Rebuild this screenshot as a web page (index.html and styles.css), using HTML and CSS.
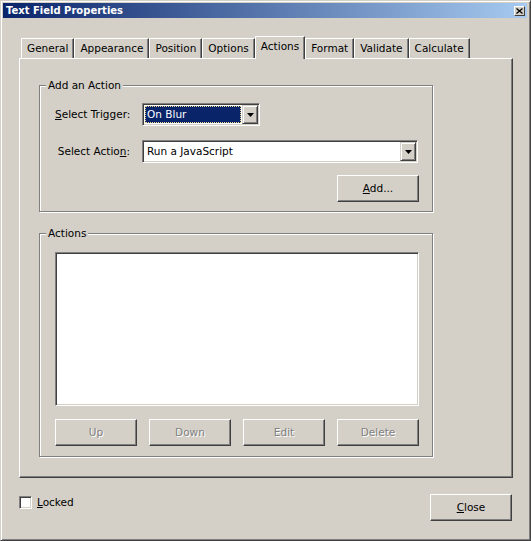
FILE: index.html
```html
<!DOCTYPE html>
<html>
<head>
<meta charset="utf-8">
<title>Text Field Properties</title>
<link rel="stylesheet" href="styles.css">
</head>
<body>
<div class="window">
  <div class="titlebar">
    <span class="title">Text Field Properties</span>
    <span class="title-close"><svg width="7" height="6" viewBox="0 0 7 6"><path d="M0.5 0.5 L6.5 5.5 M6.5 0.5 L0.5 5.5" stroke="#000" stroke-width="1.3" fill="none"/></svg></span>
  </div>
  <div class="dialog-body">
    <div class="tabs">
      <div class="tab">General</div>
      <div class="tab">Appearance</div>
      <div class="tab">Position</div>
      <div class="tab">Options</div>
      <div class="tab active">Actions</div>
      <div class="tab">Format</div>
      <div class="tab">Validate</div>
      <div class="tab">Calculate</div>
    </div>
    <div class="panel">
      <fieldset class="group group-add">
        <legend>Add an Action</legend>
        <div class="form">
          <label class="field-label"><u>S</u>elect Trigger:</label>
          <div class="combo combo-trigger">
            <div class="combo-value selected"><span>On Blur</span></div>
            <div class="combo-btn"><svg width="7" height="4" viewBox="0 0 7 4"><polygon points="0,0 7,0 3.5,4" fill="#000"/></svg></div>
          </div>
          <label class="field-label">Select Actio<u>n</u>:</label>
          <div class="combo combo-action">
            <div class="combo-value">Run a JavaScript</div>
            <div class="combo-btn"><svg width="7" height="4" viewBox="0 0 7 4"><polygon points="0,0 7,0 3.5,4" fill="#000"/></svg></div>
          </div>
        </div>
        <div class="add-row">
          <button class="btn"><u>A</u>dd...</button>
        </div>
      </fieldset>
      <fieldset class="group group-actions">
        <legend>Actions</legend>
        <div class="listbox"></div>
        <div class="btn-row">
          <button class="btn" disabled>Up</button>
          <button class="btn" disabled>Down</button>
          <button class="btn" disabled>Edit</button>
          <button class="btn" disabled>Delete</button>
        </div>
      </fieldset>
    </div>
    <div class="footer">
      <div class="check">
        <span class="checkbox"></span>
        <span class="check-label"><u>L</u>ocked</span>
      </div>
      <button class="btn"><u>C</u>lose</button>
    </div>
  </div>
</div>
</body>
</html>
```
FILE: styles.css
```css
* { box-sizing: border-box; }
html, body { margin: 0; padding: 0; }
body {
  background: #d4d0c8;
  font-family: "DejaVu Sans", "Liberation Sans", sans-serif;
  font-size: 10.5px;
  line-height: 13px;
  color: #000;
}
u { text-decoration: underline; text-underline-offset: 1px; }

.window {
  width: 531px;
  height: 541px;
  display: flex;
  flex-direction: column;
  background: #d4d0c8;
  border: 1px solid;
  border-color: #d4d0c8 #404040 #404040 #d4d0c8;
  box-shadow: inset 1px 1px #fff, inset -1px -1px #808080;
  padding: 2px 3px 2px 2px;
}

.titlebar {
  height: 15px;
  flex: none;
  display: flex;
  align-items: center;
  justify-content: space-between;
  background: linear-gradient(to right, #0a246a, #a6caf0);
  padding: 0 2px 0 3px;
}
.title {
  color: #fff;
  font-weight: bold;
  font-size: 10px;
  line-height: 15px;
}
.title-close {
  width: 11px;
  height: 10px;
  display: flex;
  align-items: center;
  justify-content: center;
  background: #d4d0c8;
  border: 1px solid;
  border-color: #fff #404040 #404040 #fff;
}

.dialog-body {
  flex: 1;
  display: flex;
  flex-direction: column;
  padding: 18px 14px 0 16px;
}

.tabs {
  display: flex;
  align-items: flex-end;
  height: 22px;
  padding-left: 2px;
}
.tab {
  height: 20px;
  padding: 0 5px;
  line-height: 19px;
  border: 1px solid;
  border-bottom: none;
  border-color: #fff #404040 transparent #fff;
  box-shadow: inset -1px 0 #808080;
  background: #d4d0c8;
  white-space: nowrap;
}
.tab.active {
  height: 23px;
  margin-bottom: -1px;
  position: relative;
  z-index: 1;
}

.panel {
  height: 420px;
  flex: none;
  border: 1px solid;
  border-color: #fff #404040 #404040 #fff;
  box-shadow: inset -1px -1px #808080;
  padding: 20px 0 0 19px;
}

.group {
  margin: 0;
  width: 394px;
  min-width: 0;
  border: 1px solid #808080;
  box-shadow: inset 1px 1px #fff, 1px 1px #fff;
}
.group legend {
  margin-left: -9px;
  padding: 0 2px;
  line-height: 13px;
  background: #d4d0c8;
}
.group-add { padding: 11px 13px 9px 15px; }
.group-actions { padding: 12px 13px 10px 15px; margin-top: 15px; }

.form {
  display: grid;
  grid-template-columns: 75px 1fr;
  column-gap: 12px;
  row-gap: 14px;
  align-items: center;
}
.field-label { text-align: right; white-space: nowrap; }

.combo {
  height: 23px;
  display: flex;
  background: #fff;
  border: 1px solid;
  border-color: #808080 #fff #fff #808080;
  box-shadow: inset 1px 1px #404040, inset -1px -1px #d4d0c8;
  padding: 1px;
}
.combo-trigger { width: 118px; }
.combo-action { width: 276px; }
.combo-value {
  flex: 1;
  display: flex;
  align-items: center;
  padding-left: 3px;
  white-space: nowrap;
}
.combo-value.selected {
  margin: 1px;
  padding-left: 1px;
  background: #0a246a;
  color: #fff;
  border: 1px dotted #e6d28c;
}
.combo-btn {
  width: 16px;
  flex: none;
  display: flex;
  align-items: center;
  justify-content: center;
  background: #d4d0c8;
  border: 1px solid;
  border-color: #d4d0c8 #404040 #404040 #d4d0c8;
  box-shadow: inset 1px 1px #fff, inset -1px -1px #808080;
}

.add-row {
  display: flex;
  justify-content: flex-end;
  margin-top: 12px;
}

.btn {
  width: 82px;
  height: 27px;
  margin: 0;
  padding: 0;
  font: inherit;
  color: #000;
  background: #d4d0c8;
  border: 1px solid;
  border-color: #fff #404040 #404040 #fff;
  box-shadow: inset -1px -1px #808080;
  border-radius: 0;
}
.btn:disabled {
  color: #808080;
  text-shadow: 1px 1px #fff;
}

.listbox {
  height: 154px;
  background: #fff;
  border: 1px solid;
  border-color: #808080 #fff #fff #808080;
  box-shadow: inset 1px 1px #404040, inset -1px -1px #d4d0c8;
}
.btn-row {
  display: flex;
  justify-content: space-between;
  margin-top: 13px;
}

.footer {
  display: flex;
  justify-content: space-between;
  align-items: flex-start;
  margin-top: 16px;
  padding-right: 1px;
}
.check {
  display: flex;
  align-items: center;
  gap: 5px;
  margin-top: 2px;
}
.checkbox {
  width: 13px;
  height: 13px;
  background: #fff;
  border: 1px solid;
  border-color: #808080 #fff #fff #808080;
  box-shadow: inset 1px 1px #404040, inset -1px -1px #d4d0c8;
}
```
